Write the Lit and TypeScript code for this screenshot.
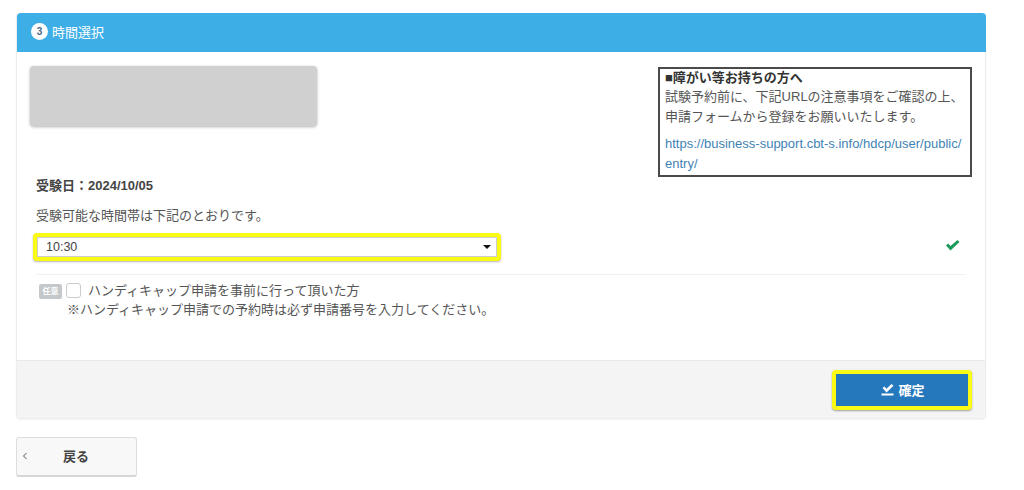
import { LitElement, html, css } from "lit";
import { customElement } from "lit/decorators.js";

@customElement("app-root")
export class AppRoot extends LitElement {
  static styles = css`
    :host { display: block; width: 1024px; height: 490px; background: #fff; font-family: "Liberation Sans", "Noto Sans CJK JP", sans-serif; color: #444; overflow: hidden; }
    .page { display: flex; flex-direction: column; padding: 13px 38px 0 16px; }
    .card { display: flex; flex-direction: column; height: 406px; box-sizing: border-box; border: 1px solid #eceded; border-top: 0; border-radius: 4px; box-shadow: 0 1px 2px rgba(0,0,0,.05); }
    .head { height: 39px; box-sizing: border-box; padding: 0 0 2px 14px; flex: none; margin: 0 -1px 0 0; background: #3eafe6; border-radius: 4px 4px 0 0; display: flex; align-items: center; gap: 4px; color: #fff; font-size: 13px; }
    .num { width: 17px; height: 17px; border-radius: 50%; background: #fff; color: #4a6a86; font-size: 10px; font-weight: 700; display: flex; align-items: center; justify-content: center; }
    .body { flex: 1; display: flex; flex-direction: column; padding: 14px 13px 0 13px; min-height: 0; }
    .top { display: flex; justify-content: space-between; align-items: flex-start; height: 111px; }
    .ph { width: 287px; height: 60px; background: #d0d0d0; border-radius: 4px; box-shadow: 0 1px 3px rgba(0,0,0,.3); }
    .note { width: 314px; height: 110px; box-sizing: border-box; border: 2px solid #4a4a4a; padding: 0 4px 0 5px; font-size: 13px; color: #555; margin-top: 1px; }
    .note b { color: #333; display: block; line-height: 17px; }
    .note p { margin: 1px 0 0; line-height: 20px; }
    .note a { display: block; margin-top: 7px; line-height: 20px; color: #3f83b5; text-decoration: none; white-space: pre-line; }
    .date { margin: 1px 0 0 6px; font-size: 13px; font-weight: 700; line-height: 16px; color: #444; }
    .lead { margin: 14px 0 0 6px; font-size: 13px; line-height: 16px; color: #555; }
    .selrow { display: flex; justify-content: space-between; align-items: center; margin-top: 9px; padding-right: 12px; }
    .selrow svg { margin-bottom: 4px; }
    .sel { position: relative; width: 468px; margin-left: 3px; height: 28px; box-sizing: border-box; border: 4px solid #fafa14; border-radius: 4px; box-shadow: 0 1px 2px rgba(0,0,0,.3); background: #fff; }
    .sel select { appearance: none; width: 100%; height: 100%; box-sizing: border-box; border: 0; outline: 1px solid #ccc; outline-offset: -1px; background: transparent; padding: 0 0 0 9px; font: 12.5px "Liberation Sans", sans-serif; color: #444; }
    .arrow { position: absolute; right: 6px; top: 8px; width: 0; height: 0; border: 4px solid transparent; border-top-color: #111; border-bottom: 0; }
    hr { border: 0; border-top: 1px solid #f1f1f1; margin: 13px 0 0 6px; width: 930px; }
    .opt { display: flex; margin: 6px 0 0 9px; font-size: 13px; line-height: 19px; color: #555; }
    .badge { flex: none; width: 23px; height: 15px; margin-top: 3px; background: #c4c8cb; color: #fff; border-radius: 2px; font-size: 8px; line-height: 15px; text-align: center; font-weight: 700; }
    .box { flex: none; width: 15px; height: 15px; margin: 2px 7px 0 4px; border: 1px solid #ccc; border-radius: 3px; background: #fff; box-sizing: border-box; }
    .opt .sub { margin-left: -21px; }
    .foot { height: 58px; flex: none; box-sizing: border-box; background: #f4f4f4; border-top: 1px solid #e8e8e8; display: flex; align-items: center; justify-content: flex-end; padding-right: 13px; border-radius: 0 0 4px 4px; }
    .ok { width: 140px; height: 40px; box-sizing: border-box; border: 4px solid #fafa14; border-radius: 4px; background: #2678bd; color: #fff; font: 700 13px "Liberation Sans", "Noto Sans CJK JP", sans-serif; display: flex; align-items: center; justify-content: center; gap: 4px; box-shadow: 0 1px 2px rgba(0,0,0,.35); padding: 0 0 0 2px; }
    .back { margin-top: 18px; width: 121px; height: 40px; box-sizing: border-box; border: 1px solid #ddd; border-bottom: 2px solid #d6d6d6; border-radius: 3px; background: #f8f8f8; display: flex; align-items: center; padding: 0 0 2px 4px; font: 700 13px "Liberation Sans", "Noto Sans CJK JP", sans-serif; color: #444; }
    .back svg { flex: none; }
    .back span { margin-left: 34px; }
  `;
  render() {
    return html`<div class="page">
      <div class="card">
        <div class="head"><span class="num">3</span><span>時間選択</span></div>
        <div class="body">
          <div class="top">
            <div class="ph"></div>
            <div class="note">
              <b>■障がい等お持ちの方へ</b>
              <p>試験予約前に、下記URLの注意事項をご確認の上、<br />申請フォームから登録をお願いいたします。</p>
              <a href="#">https://business-support.cbt-s.info/hdcp/user/public/
entry/</a>
            </div>
          </div>
          <div class="date">受験日：2024/10/05</div>
          <div class="lead">受験可能な時間帯は下記のとおりです。</div>
          <div class="selrow">
            <div class="sel"><select><option>10:30</option></select><span class="arrow"></span></div>
            <svg width="15" height="12" viewBox="0 0 15 12"><path d="M1 6.5 L3.2 4.5 L5.5 7 L12.5 1 L14.5 3 L5.5 11.5 Z" fill="#1a9b5c"/></svg>
          </div>
          <hr />
          <div class="opt">
            <span class="badge">任意</span>
            <span class="box"></span>
            <div>ハンディキャップ申請を事前に行って頂いた方<br /><span class="sub">※ハンディキャップ申請での予約時は必ず申請番号を入力してください。</span></div>
          </div>
        </div>
        <div class="foot">
          <button class="ok"><svg width="13" height="13" viewBox="0 0 13 13"><path d="M1.5 5 L3.5 3.5 L5.5 5.8 L10.5 1 L12.5 2.8 L5.5 9.5 Z M0.5 10.5 H12.5 V12.5 H0.5 Z" fill="#fff"/></svg><span>確定</span></button>
        </div>
      </div>
      <div class="back"><svg width="8" height="10" viewBox="0 0 8 10"><path d="M5.5 2 L2.5 5 L5.5 8" fill="none" stroke="#555" stroke-width="1"/></svg><span>戻る</span></div>
    </div>`;
  }
}
